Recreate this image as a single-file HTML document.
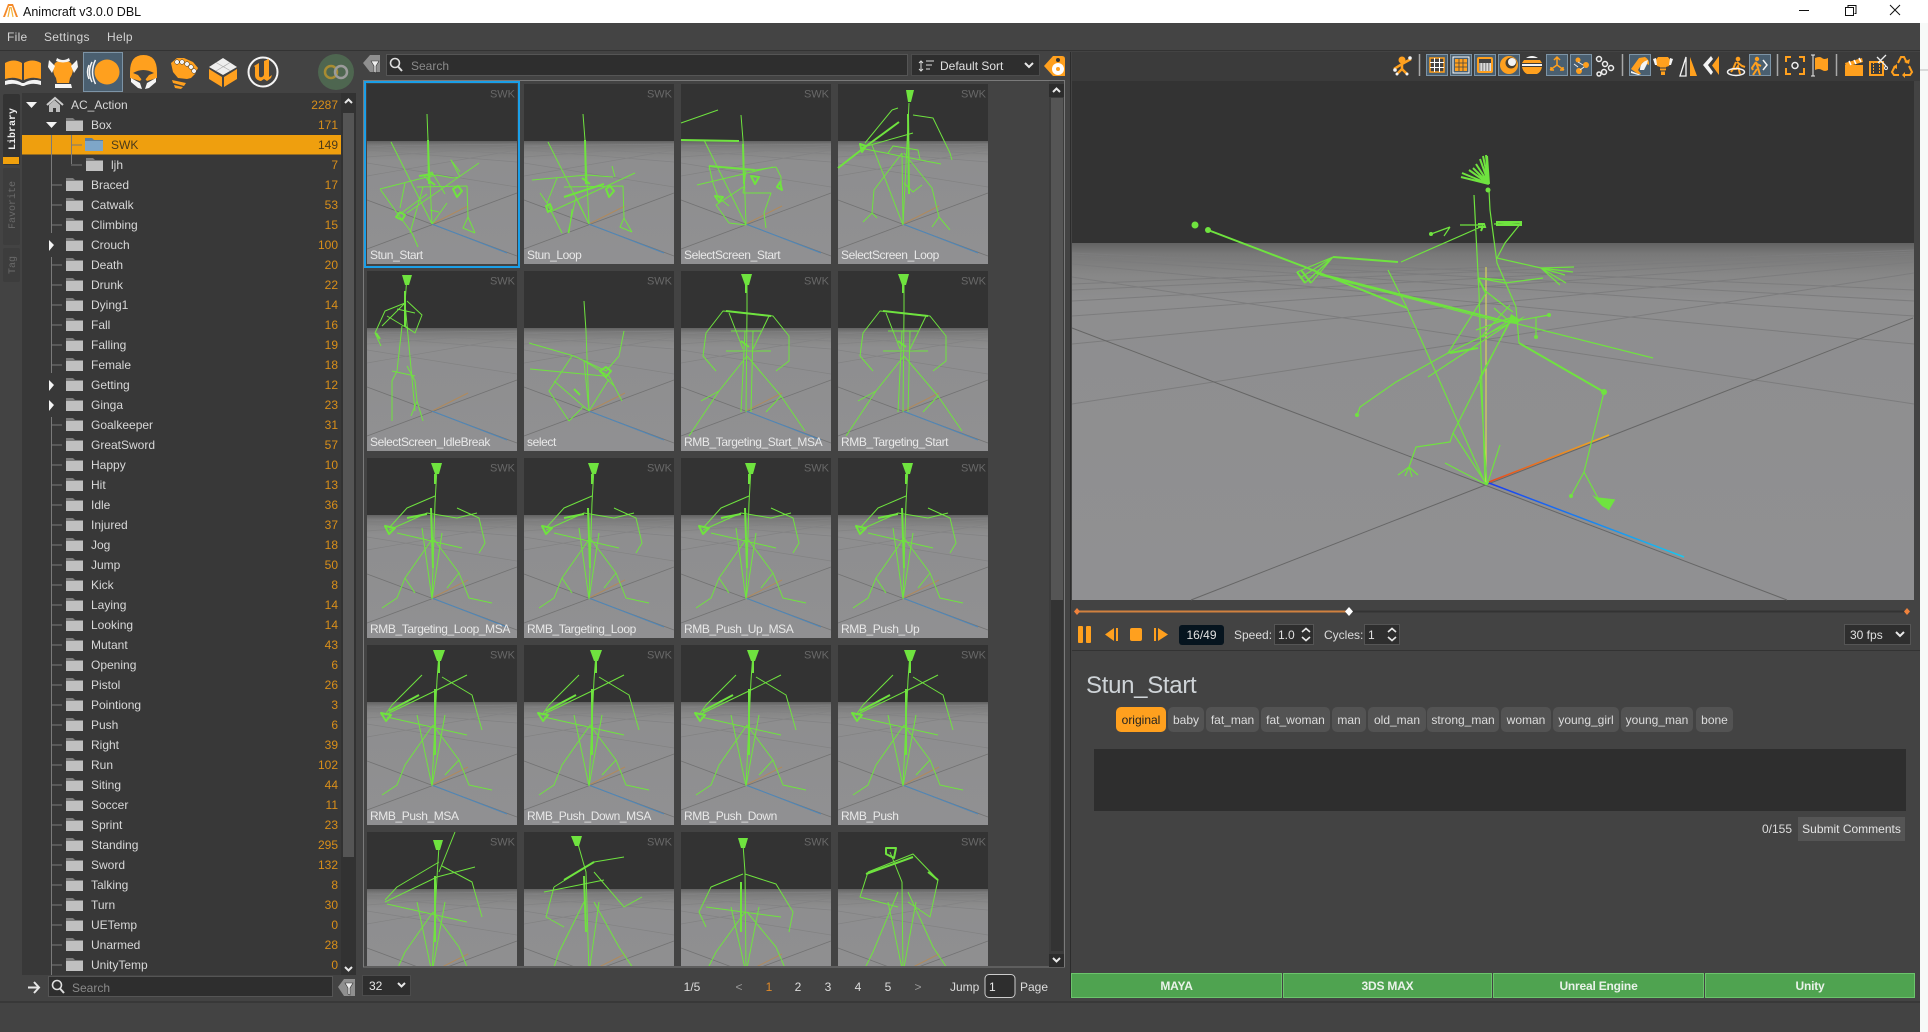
<!DOCTYPE html>
<html><head><meta charset="utf-8"><title>Animcraft v3.0.0 DBL</title>
<style>
html,body{margin:0;padding:0;width:1928px;height:1032px;overflow:hidden;background:#434343}
svg{display:block;position:absolute;left:0;top:0}
text{font-family:"Liberation Sans",sans-serif;font-size:12px}
.t{fill:#d8d8d8}.c{fill:#d98f1a;text-anchor:end}.l{fill:#e8e8e8;letter-spacing:-.4px}.s{fill:#686868;font-size:11px;text-anchor:end}
.g{fill:none;stroke:#6fe33f;stroke-width:1;stroke-linejoin:round}
.gb{fill:none;stroke:#6fe33f;stroke-width:2;stroke-linejoin:round}
.gf{fill:#6fe33f}
.tag{fill:#535353}.tt{fill:#dcdcdc;text-anchor:middle}
.o{fill:#ffa01e}.w{fill:#f4f4f4}
.ol{fill:none;stroke:#ffa01e;stroke-width:2}.wl{fill:none;stroke:#f4f4f4;stroke-width:1.5}
.bx{fill:#4a5f70;stroke:#7d94a6}
.pg{fill:#dcdcdc;text-anchor:middle}
.ex{fill:#e9f2e9;text-anchor:middle;font-weight:bold;letter-spacing:-.2px}
.ar{fill:none;stroke:#e8e8e8;stroke-width:2}
.m{fill:#d4d4d4;letter-spacing:.3px}
</style></head><body>
<svg width="1928" height="1032" viewBox="0 0 1928 1032" xmlns="http://www.w3.org/2000/svg">
<defs>
<linearGradient id="fl" x1="0" y1="0" x2="0" y2="1"><stop offset="0" stop-color="#636363"/><stop offset=".03" stop-color="#787878"/><stop offset=".09" stop-color="#878787"/><stop offset=".16" stop-color="#8e8e8f"/><stop offset="1" stop-color="#909092"/></linearGradient>
<linearGradient id="ax1" x1="0" y1="1" x2="1" y2="0"><stop offset="0" stop-color="#e8481c"/><stop offset="1" stop-color="#f0b020"/></linearGradient>
<linearGradient id="ax2" x1="0" y1="0" x2="1" y2="1"><stop offset="0" stop-color="#1c3cf0"/><stop offset="1" stop-color="#18c8f0"/></linearGradient>
<clipPath id="lc"><rect x="365" y="81" width="684" height="885"/></clipPath>
<g id="f"><path d="M0-7h7l2 2h8v3H0z" fill="#7d7d7d"/><path d="M0-4h17v10H0z" fill="#c0c0c0"/></g>
<g id="tb">
<rect width="150" height="57" fill="#333"/><rect y="57" width="150" height="123" fill="url(#fl)"/>
<path d="M0 79L150 103M0 66L150 78M0 62L150 70M0 73L150 62M0 92L150 66M0 62L150 60" stroke="#828283" stroke-width=".7" fill="none"/>
<path d="M0 116L150 172M0 165L150 109" stroke="#727272" stroke-width=".8" fill="none"/>
<path d="M65 140L101 122" stroke="#b08a5c" stroke-width="1"/><path d="M65 140L140 169" stroke="#4f87b8" stroke-width="1"/>
</g>
<g id="pA"><path class="g" d="M60 30L61 56L65 140M24 58L65 140M13 105L56 94L70 91L86 94L93 93M13 105L33 133L45 149L51 163M38 99L33 124M93 93L84 76L93 88M112 79L40 129M100 102L101 133L96 144L108 149M101 133L108 149M50 103L100 102M56 103L43 149M65 140L80 119M63 126L72 128M66 100L57 92L65 88L78 110M33 130L60 110"/><path class="gb" d="M61 56L62 100M33 128l-4 5 6 3 3-5-5-3M86 105l4 8 5-6-4-5zM52 92L66 90M60 95l8 6"/></g>
<g id="pB"><path class="g" d="M59 30L61 56L65 140M24 58L65 140M8 96L63 91L89 93M33 94L23 119L16 109M23 119L38 149M111 89L26 128M88 82L91 93M99 102L100 134L96 143L108 148M100 134L108 148M40 103L99 102M44 149L52 113L65 140M45 149L48 125"/><path class="gb" d="M61 56L62 100M82 105l3 8 5-6-4-5zM22 122l2 6 4-3-2-5zM40 113L80 100M58 94l8 6"/></g>
<g id="pC"><path class="g" d="M60 31L62 56L65 141M23 56L65 141M37 26L0 39M28 82L74 86L95 83M28 82L32 99L37 113M16 101L92 83M95 83L100 93L100 106M65 86L62 109L90 109L83 129L85 144M62 103L35 121L48 139M48 139L65 141M37 113L48 122"/><path class="gb" d="M0 56L58 57M28 82L74 86M70 92l4 8 4-7zM34 112l4 6 4-5zM99 98l2 8-5-3zM62 60L63 100"/></g>
<g id="pD"><path class="g" d="M71 19L65 141M54 26L27 59M22 64L75 49M75 31L95 34L112 69L114 76M22 64L103 80M64 69L65 141M34 61L65 141M64 69L36 106L34 129L25 138M34 129L39 134M66 69L94 104L101 133L112 146M101 133L94 143M50 69L55 62L80 66L82 75M66 99L75 108L84 101M54 26L60 24"/><path class="gb" d="M0 84L27 63L61 38M70 30l1 80M22 60l2 8 4-6z"/><path class="gf" d="M68 6l8 0-3 12h-3z"/></g>
<g id="pE"><path class="g" d="M40 5L38 32L48 140M38 32L18 40L8 62L14 75M40 30L55 44L48 62L38 55M35 55L30 100L25 110L25 150M40 95L48 110L50 130L56 150M30 38L48 42M20 45L45 60M38 32L15 55M25 100L48 105M50 130L44 145"/><path class="gb" d="M38 20L38 55M9 62l4 6"/><path class="gf" d="M35 4l10 0-3 10h-4z"/></g>
<g id="pF"><path class="g" d="M60 30L62 60L65 140M5 72L50 85L82 100L95 85L100 60M6 98L80 105L90 115M48 85L25 120L45 150M65 140L60 90L85 105L98 130M30 110L65 140L85 108M45 150L60 135"/><path class="gb" d="M76 100l6 6 5-6-5-4zM50 118l6 6"/></g>
<g id="pG"><path class="g" d="M66 6L66 40L65 141M66 42L42 40L25 62L22 85L35 100M66 42L92 45L108 65L108 90L95 100M45 80L90 80M50 60L80 60M66 85L38 120L8 165M66 85L100 125L124 160M64 60L60 141M72 60L70 141M38 120L20 130M100 125L85 141M48 42L62 78M88 45L72 78"/><path class="gb" d="M65 12L65 22M45 40L90 45M60 70l8 6"/><path class="gf" d="M60 3l11 0-3 11h-4z"/></g>
<g id="pH"><path class="g" d="M70 10L68 45L65 141M68 38L40 50L22 70M22 72L60 55L90 60L110 55M90 50L112 60L118 85L112 95M30 75L95 90M66 80L38 120L30 140L15 150M66 80L92 115L102 140L125 145M65 141L55 70M65 141L75 75M92 115L80 130M38 120L48 135"/><path class="gb" d="M68 16L68 26M18 68l4 8 6-6zM60 56L40 60M64 50L66 110"/><path class="gf" d="M64 5l11 0-3 11h-4z"/></g>
<g id="pI"><path class="g" d="M72 8L70 35L65 141M55 30L25 60L18 70M18 70L70 45L100 30M75 32L105 50L115 85M20 72L100 90M66 80L38 120L30 140L15 150M66 80L92 115L102 140L125 145M65 141L50 70M65 141L78 70M92 115L78 130"/><path class="gb" d="M72 15L72 28M14 68l5 8 5-6zM22 66L52 50M68 44L68 110"/><path class="gf" d="M66 5l12 0-4 11h-4z"/></g>
<g id="pJ"><path class="g" d="M72 40L88 0M72 14L70 45L65 141M72 30L30 55L18 68M18 70L70 45L108 35M75 34L105 50L115 85M20 72L100 90M66 80L38 120L28 142L15 150M66 80L92 115L102 140L125 145M65 141L50 70M65 141L78 70"/><path class="gb" d="M68 44L68 110"/><path class="gf" d="M66 8l10 0-3 10h-4z"/></g>
<g id="pK"><path class="g" d="M52 5L62 40L65 141M30 55L70 30L100 25M30 55L22 85L40 95M20 60L80 48M70 40L100 75L118 65M60 70L35 120L25 150M70 70L95 115L115 145M65 141L75 70"/><path class="gb" d="M40 48L70 30M60 44L62 100"/><path class="gf" d="M47 4l11 0-3 10h-4z"/></g>
<g id="pL"><path class="g" d="M62 12L64 40L65 141M62 42L30 55L18 80L25 95M64 42L95 52L112 80L108 100M25 75L100 85M64 80L35 120L20 150M66 80L95 115L110 150M65 141L50 75M65 141L78 75"/><path class="gb" d="M60 50L60 100"/><path class="gf" d="M57 6l10 0-3 10h-4z"/></g>
<g id="pM"><path class="g" d="M52 20L64 50L65 141M30 40L75 22L100 48L92 85L70 70M30 40L22 65L60 75M60 60L35 120L20 150M70 60L95 115L115 145M65 141L78 70M65 141L50 70"/><path class="gb" d="M48 16l10 0-2 10-8-4zM28 42L75 25M90 40L100 48"/></g>
<g id="sk"><path d="M1489 190L1490 210L1497 263L1516 307M1474 195L1479 293L1485 483M1483 225L1460 225M1483 226L1401 262M1431 234L1450 227M1450 227L1444 236M1494 224L1521 223L1505 243L1497 258M1388 270L1407 308L1486 485M1510 322L1653 358M1510 322L1549 315M1536 317L1536 337M1497 258L1541 268M1541 268L1574 267M1541 268L1566 283M1541 268L1565 275M1541 268L1573 272M1541 268L1560 285M1478 278L1505 283L1543 278M1478 278L1505 280M1483 337L1510 320M1448 353L1478 348M1510 323L1448 353L1396 382L1360 407L1357 415M1510 323L1428 377M1486 293L1448 353M1510 320L1453 433L1450 442L1416 447L1409 467L1398 475M1409 467L1418 475M1409 467L1405 476M1409 467L1412 477M1516 307L1519 343M1604 392L1584 472L1571 496M1584 472L1598 498L1609 510M1598 498L1615 500M1445 463L1487 485M1500 445L1487 485M1480 377L1510 322M1480 377L1487 485M1453 433L1487 485M1494 308L1510 322M1480 338L1510 305M1476 330L1510 318M1494 298L1513 312M1484 290L1510 310M1333 257L1300 278M1333 257L1305 283M1333 257L1311 283M1333 257L1297 272" fill="none" stroke="#6fe33f" stroke-width="1.200"/>
<path d="M1208 230L1305 267L1407 308M1316 273L1508 322M1333 257L1398 262M1519 343L1604 392M1486 293L1478 278M1450 353L1478 348" fill="none" stroke="#6fe33f" stroke-width="2"/>
<path d="M1320 275L1500 322" fill="none" stroke="#6fe33f" stroke-width="1"/>
<path d="M1489 184l-6-28M1489 184l-3-29M1489 184l-2-28M1489 184l-9-25M1489 184l-13-20M1489 184l-16-16M1489 184l-20-14M1489 184l-27-11M1489 184l-28-7" fill="none" stroke="#6fe33f" stroke-width="2"/>
<path d="M1592 495l6 3 17 2-6 10-7-4zM1508 323l3-9 8 5 6-3-8 8z" fill="#6fe33f"/>
<path d="M1478 224h6l1 3-7 0M1483 226l-2 5M1497 225h24v-3h-24zM1297 272l8 11M1301 270l10 13" fill="none" stroke="#6fe33f" stroke-width="2"/>
<circle cx="1195" cy="225" r="3.500" fill="#6fe33f"/><circle cx="1208" cy="230" r="3" fill="#6fe33f"/><circle cx="1549" cy="315" r="2" fill="#6fe33f"/><circle cx="1571" cy="496" r="2" fill="#6fe33f"/><circle cx="1536" cy="337" r="2" fill="#6fe33f"/><circle cx="1488" cy="190" r="2.500" fill="#6fe33f"/><circle cx="1357" cy="415" r="2" fill="#6fe33f"/><circle cx="1604" cy="392" r="3" fill="#6fe33f"/><circle cx="1431" cy="234" r="2" fill="#6fe33f"/>
</g>
</defs>

<rect width="1928" height="1032" fill="#434343"/>
<rect x="1920" y="23" width="8" height="1009" fill="#f7f9f8"/>
<path d="M1920 70h8" stroke="#bbb"/>
<rect width="1928" height="23" fill="#fff"/>
<path d="M3 17L8 4h5l5 13h-2L12 6H9L5 17z" fill="#f4892a"/><path d="M8 17L10 7M11 7l2 10" stroke="#f4b43a" stroke-width="1.200" fill="none"/>
<text x="23" y="16" fill="#111" style="font-size:12.500px">Animcraft v3.0.0 DBL</text>
<path d="M1799 10.500h10" stroke="#111"/><path d="M1845.500 7.500h8v8h-8zM1848 7V5.500h8v8h-1.500" fill="none" stroke="#111"/><path d="M1890 5l10 10M1900 5l-10 10" stroke="#111"/>

<rect y="23" width="1920" height="27" fill="#444"/>
<text class="m" x="7" y="41">File</text><text class="m" x="44" y="41">Settings</text><text class="m" x="107" y="41">Help</text>
<path d="M0 50.500H1920" stroke="#333"/>

<!-- main toolbar icons -->
<path class="o" d="M5 63Q14 58 22 63V80Q14 76 5 79zM24 63Q32 58 41 63V79Q32 76 24 80z"/>
<path class="w" d="M5 81Q14 78 22 83h2Q32 78 41 81v4Q32 82 24 86h-2Q14 82 5 85z"/>
<path class="o" d="M55 63q8-5 16 0q4 8-1 15l-1 5H57l-1-5q-5-7-1-15z"/>
<path class="w" d="M49 60l6 6-3 7-4-6zM77 60l-6 6 3 7 4-6zM57 58q6 4 12 0l1 3q-7 3-14 0zM55 84h16l1 4H55z"/>
<rect x="83.500" y="52.500" width="39" height="39" class="bx"/>
<circle cx="107" cy="72" r="12.500" class="o"/>
<path d="M92 62q-5 10 0 20M95.500 60q-6 12 0 24M89 65q-3 7 0 14" class="wl"/>
<path class="o" d="M143.500 55q13.500 0 13.500 17v6l-10 3-3.500-4-3.500 4-10-3v-6q0-17 13.500-17z"/>
<path d="M133 73q10-6 21 0l-5 2-4 5-1.500 10-1.500-10-4-5z" fill="#434343"/>
<path class="w" d="M131 78l9 5 2 6-4-1-7-6zM156 78l-9 5-2 6 4-1 7-6z"/>
<path class="o" d="M171 63l6-5h7l9 4 5 6-3 6-4 4-4 1-9-1-5-6zM172 80l14 3-2 3-11-3zM174 85l9 2-2 2-6-1z"/>
<g class="w" stroke="#333" stroke-width=".5"><circle cx="177" cy="62" r="2.300"/><circle cx="182" cy="62" r="2.300"/><circle cx="187" cy="64" r="2.300"/><circle cx="191" cy="67" r="2.300"/><circle cx="194" cy="71" r="2.300"/></g>
<path d="M223 58l14 9-14 8-14-8z" fill="#eee"/><path d="M216 62.500l14 8M223 67l7-4.500M216 71l14-8.500" stroke="#aaa" stroke-width=".7" fill="none"/>
<path class="o" d="M209 69l13 8v10l-13-8zM224 77l13-8v10l-13 8z"/>
<circle cx="263" cy="72" r="14.500" fill="none" stroke="#f4f4f4" stroke-width="2"/>
<path class="o" d="M254 66l5-3v12q0 3 3 2 2-1 2-3V61l5-2v18l3-2-1 3-4 3-3-2-3 2q-6-1-6-6V67z"/>
<circle cx="336" cy="72" r="18" fill="#4e6650"/><circle cx="331" cy="72" r="6" fill="none" stroke="#a88c32" stroke-width="2.500"/><circle cx="341" cy="72" r="6" fill="none" stroke="#9b9b9b" stroke-width="2.500"/>

<!-- left tabs -->
<rect x="3" y="94" width="17" height="71" fill="#333" rx="2"/><rect x="3" y="157" width="16" height="7" fill="#f0a00c"/>
<rect x="3" y="168" width="17" height="77" fill="#3d3d3d" rx="2"/><rect x="3" y="248" width="17" height="34" fill="#3d3d3d" rx="2"/>
<text transform="translate(15,150) rotate(-90)" fill="#f0f0f0" style="font-family:'Liberation Mono',monospace;font-size:10px;font-weight:bold">Library</text>
<text transform="translate(15,229) rotate(-90)" fill="#6a6a6a" style="font-family:'Liberation Mono',monospace;font-size:10px">Favorite</text>
<text transform="translate(15,274) rotate(-90)" fill="#6a6a6a" style="font-family:'Liberation Mono',monospace;font-size:10px">Tag</text>

<!-- tree -->
<rect x="22" y="93" width="334" height="905" fill="#383838"/>
<rect x="341" y="93" width="15" height="883" fill="#323232"/>
<rect x="343" y="113" width="11" height="744" fill="#555"/>
<path d="M345 103l3.500-3.500 3.500 3.500M345 967l3.500 3.500 3.500-3.500" class="ar"/>
<rect x="22" y="135" width="319" height="19.500" fill="#ef9f0e"/>
<path d="M51.500 135V233M51.500 257V373M51.500 417V975M71.500 135V164M51 185h11M51 205h11M51 225h11M51 265h11M51 285h11M51 305h11M51 325h11M51 345h11M51 365h11M51 425h11M51 445h11M51 465h11M51 485h11M51 505h11M51 525h11M51 545h11M51 565h11M51 585h11M51 605h11M51 625h11M51 645h11M51 665h11M51 685h11M51 705h11M51 725h11M51 745h11M51 765h11M51 785h11M51 805h11M51 825h11M51 845h11M51 865h11M51 885h11M51 905h11M51 925h11M51 945h11M51 965h11M71 145h11M71 165h11" stroke="#7a7a7a" fill="none"/>
<path class="w" d="M26 102h11l-5.500 6zM46 122h11l-5.500 6zM49 240l5 5-5 6zM49 380l5 5-5 6zM49 400l5 5-5 6z"/>
<path d="M47 105l8-7 8 7" fill="none" stroke="#ccc" stroke-width="2"/><path d="M49 105v7h4v-4h3v4h4v-7l-5.500-5z" fill="#bbb"/>
<path d="M85 138h7l2 2h9v3H85z" fill="#5d7f9e"/><path d="M85 141h18v10H85z" fill="#7ea6c8"/>
<use href="#f" x="66" y="125"/><use href="#f" x="86" y="165"/>
<use href="#f" x="66" y="185"/><use href="#f" x="66" y="205"/><use href="#f" x="66" y="225"/><use href="#f" x="66" y="245"/><use href="#f" x="66" y="265"/><use href="#f" x="66" y="285"/><use href="#f" x="66" y="305"/><use href="#f" x="66" y="325"/><use href="#f" x="66" y="345"/><use href="#f" x="66" y="365"/><use href="#f" x="66" y="385"/><use href="#f" x="66" y="405"/><use href="#f" x="66" y="425"/><use href="#f" x="66" y="445"/><use href="#f" x="66" y="465"/><use href="#f" x="66" y="485"/><use href="#f" x="66" y="505"/><use href="#f" x="66" y="525"/><use href="#f" x="66" y="545"/><use href="#f" x="66" y="565"/><use href="#f" x="66" y="585"/><use href="#f" x="66" y="605"/><use href="#f" x="66" y="625"/><use href="#f" x="66" y="645"/><use href="#f" x="66" y="665"/><use href="#f" x="66" y="685"/><use href="#f" x="66" y="705"/><use href="#f" x="66" y="725"/><use href="#f" x="66" y="745"/><use href="#f" x="66" y="765"/><use href="#f" x="66" y="785"/><use href="#f" x="66" y="805"/><use href="#f" x="66" y="825"/><use href="#f" x="66" y="845"/><use href="#f" x="66" y="865"/><use href="#f" x="66" y="885"/><use href="#f" x="66" y="905"/><use href="#f" x="66" y="925"/><use href="#f" x="66" y="945"/><use href="#f" x="66" y="965"/>

<text class="t" x="71" y="109">AC_Action</text><text class="c" x="338" y="109">2287</text>
<text class="t" x="91" y="129">Box</text><text class="c" x="338" y="129">171</text>
<text x="111" y="149" fill="#4a3a1a">SWK</text><text x="338" y="149" fill="#4a3a1a" text-anchor="end">149</text>
<text class="t" x="111" y="169">ljh</text><text class="c" x="338" y="169">7</text>
<text class="t" x="91" y="189">Braced</text><text class="c" x="338" y="189">17</text>
<text class="t" x="91" y="209">Catwalk</text><text class="c" x="338" y="209">53</text>
<text class="t" x="91" y="229">Climbing</text><text class="c" x="338" y="229">15</text>
<text class="t" x="91" y="249">Crouch</text><text class="c" x="338" y="249">100</text>
<text class="t" x="91" y="269">Death</text><text class="c" x="338" y="269">20</text>
<text class="t" x="91" y="289">Drunk</text><text class="c" x="338" y="289">22</text>
<text class="t" x="91" y="309">Dying1</text><text class="c" x="338" y="309">14</text>
<text class="t" x="91" y="329">Fall</text><text class="c" x="338" y="329">16</text>
<text class="t" x="91" y="349">Falling</text><text class="c" x="338" y="349">19</text>
<text class="t" x="91" y="369">Female</text><text class="c" x="338" y="369">18</text>
<text class="t" x="91" y="389">Getting</text><text class="c" x="338" y="389">12</text>
<text class="t" x="91" y="409">Ginga</text><text class="c" x="338" y="409">23</text>
<text class="t" x="91" y="429">Goalkeeper</text><text class="c" x="338" y="429">31</text>
<text class="t" x="91" y="449">GreatSword</text><text class="c" x="338" y="449">57</text>
<text class="t" x="91" y="469">Happy</text><text class="c" x="338" y="469">10</text>
<text class="t" x="91" y="489">Hit</text><text class="c" x="338" y="489">13</text>
<text class="t" x="91" y="509">Idle</text><text class="c" x="338" y="509">36</text>
<text class="t" x="91" y="529">Injured</text><text class="c" x="338" y="529">37</text>
<text class="t" x="91" y="549">Jog</text><text class="c" x="338" y="549">18</text>
<text class="t" x="91" y="569">Jump</text><text class="c" x="338" y="569">50</text>
<text class="t" x="91" y="589">Kick</text><text class="c" x="338" y="589">8</text>
<text class="t" x="91" y="609">Laying</text><text class="c" x="338" y="609">14</text>
<text class="t" x="91" y="629">Looking</text><text class="c" x="338" y="629">14</text>
<text class="t" x="91" y="649">Mutant</text><text class="c" x="338" y="649">43</text>
<text class="t" x="91" y="669">Opening</text><text class="c" x="338" y="669">6</text>
<text class="t" x="91" y="689">Pistol</text><text class="c" x="338" y="689">26</text>
<text class="t" x="91" y="709">Pointiong</text><text class="c" x="338" y="709">3</text>
<text class="t" x="91" y="729">Push</text><text class="c" x="338" y="729">6</text>
<text class="t" x="91" y="749">Right</text><text class="c" x="338" y="749">39</text>
<text class="t" x="91" y="769">Run</text><text class="c" x="338" y="769">102</text>
<text class="t" x="91" y="789">Siting</text><text class="c" x="338" y="789">44</text>
<text class="t" x="91" y="809">Soccer</text><text class="c" x="338" y="809">11</text>
<text class="t" x="91" y="829">Sprint</text><text class="c" x="338" y="829">23</text>
<text class="t" x="91" y="849">Standing</text><text class="c" x="338" y="849">295</text>
<text class="t" x="91" y="869">Sword</text><text class="c" x="338" y="869">132</text>
<text class="t" x="91" y="889">Talking</text><text class="c" x="338" y="889">8</text>
<text class="t" x="91" y="909">Turn</text><text class="c" x="338" y="909">30</text>
<text class="t" x="91" y="929">UETemp</text><text class="c" x="338" y="929">0</text>
<text class="t" x="91" y="949">Unarmed</text><text class="c" x="338" y="949">28</text>
<text class="t" x="91" y="969">UnityTemp</text><text class="c" x="338" y="969">0</text>

<!-- tree bottom bar -->
<rect x="22" y="975" width="334" height="23" fill="#434343"/>
<path d="M28 987.500h10M34 982l5 5.500-5 5.500" class="ar"/>
<rect x="48.500" y="976.500" width="284" height="20" fill="#2e2e2e" stroke="#555"/>
<circle cx="57" cy="985" r="4.500" fill="none" stroke="#ddd" stroke-width="1.600"/><path d="M60 988.500l4 4.500" stroke="#ddd" stroke-width="2"/>
<text x="72" y="992" fill="#8a8a8a">Search</text>
<path d="M338 987l6-8h11v17h-11z" fill="#8f8f8f"/><path d="M345 983h8l-3 5v7l-2-1v-6z" fill="#eee" stroke="#333" stroke-width=".6"/>

<!-- search row -->
<path d="M363 63l7-8h10v17h-10z" fill="#8f8f8f"/><path d="M371 61h8l-3 5v7l-2-1v-6z" fill="#eee" stroke="#333" stroke-width=".6"/>
<rect x="386.500" y="54.500" width="521" height="21" fill="#2e2e2e" stroke="#555"/>
<circle cx="395" cy="63" r="4.500" fill="none" stroke="#ddd" stroke-width="1.600"/><path d="M398 66.500l4 4.500" stroke="#ddd" stroke-width="2"/>
<text x="411" y="70" fill="#8a8a8a">Search</text>
<rect x="911.500" y="54.500" width="128" height="21" fill="#2e2e2e" stroke="#4c4c4c"/>
<path d="M921 61v10M919 63l2-2 2 2M919 69l2 2 2-2M926 61h8M926 65h6M926 69h4" stroke="#ddd" fill="none"/>
<text x="940" y="70" fill="#e0e0e0">Default Sort</text>
<path d="M1025 63l4 4 4-4" class="ar"/>
<path class="o" d="M1044 66l9-10h9q3 0 3 3v17h-12z"/><circle cx="1058" cy="69" r="6" fill="#fff"/><circle cx="1058" cy="69" r="2" fill="#ffa01e"/><circle cx="1058" cy="60" r="2" fill="#333"/>

<!-- list -->
<rect x="363.500" y="80.500" width="701" height="886.500" fill="#434343" stroke="#7a7a7a"/>
<g clip-path="url(#lc)">
<g transform="translate(367,84)"><use href="#tb"/><use href="#pA"/><text class="s" x="148" y="13.500">SWK</text><text class="l" x="3" y="175">Stun_Start</text></g>
<g transform="translate(524,84)"><use href="#tb"/><use href="#pB"/><text class="s" x="148" y="13.500">SWK</text><text class="l" x="3" y="175">Stun_Loop</text></g>
<g transform="translate(681,84)"><use href="#tb"/><use href="#pC"/><text class="s" x="148" y="13.500">SWK</text><text class="l" x="3" y="175">SelectScreen_Start</text></g>
<g transform="translate(838,84)"><use href="#tb"/><use href="#pD"/><text class="s" x="148" y="13.500">SWK</text><text class="l" x="3" y="175">SelectScreen_Loop</text></g>
<g transform="translate(367,271)"><use href="#tb"/><use href="#pE"/><text class="s" x="148" y="13.500">SWK</text><text class="l" x="3" y="175">SelectScreen_IdleBreak</text></g>
<g transform="translate(524,271)"><use href="#tb"/><use href="#pF"/><text class="s" x="148" y="13.500">SWK</text><text class="l" x="3" y="175">select</text></g>
<g transform="translate(681,271)"><use href="#tb"/><use href="#pG"/><text class="s" x="148" y="13.500">SWK</text><text class="l" x="3" y="175">RMB_Targeting_Start_MSA</text></g>
<g transform="translate(838,271)"><use href="#tb"/><use href="#pG"/><text class="s" x="148" y="13.500">SWK</text><text class="l" x="3" y="175">RMB_Targeting_Start</text></g>
<g transform="translate(367,458)"><use href="#tb"/><use href="#pH"/><text class="s" x="148" y="13.500">SWK</text><text class="l" x="3" y="175">RMB_Targeting_Loop_MSA</text></g>
<g transform="translate(524,458)"><use href="#tb"/><use href="#pH"/><text class="s" x="148" y="13.500">SWK</text><text class="l" x="3" y="175">RMB_Targeting_Loop</text></g>
<g transform="translate(681,458)"><use href="#tb"/><use href="#pH"/><text class="s" x="148" y="13.500">SWK</text><text class="l" x="3" y="175">RMB_Push_Up_MSA</text></g>
<g transform="translate(838,458)"><use href="#tb"/><use href="#pH"/><text class="s" x="148" y="13.500">SWK</text><text class="l" x="3" y="175">RMB_Push_Up</text></g>
<g transform="translate(367,645)"><use href="#tb"/><use href="#pI"/><text class="s" x="148" y="13.500">SWK</text><text class="l" x="3" y="175">RMB_Push_MSA</text></g>
<g transform="translate(524,645)"><use href="#tb"/><use href="#pI"/><text class="s" x="148" y="13.500">SWK</text><text class="l" x="3" y="175">RMB_Push_Down_MSA</text></g>
<g transform="translate(681,645)"><use href="#tb"/><use href="#pI"/><text class="s" x="148" y="13.500">SWK</text><text class="l" x="3" y="175">RMB_Push_Down</text></g>
<g transform="translate(838,645)"><use href="#tb"/><use href="#pI"/><text class="s" x="148" y="13.500">SWK</text><text class="l" x="3" y="175">RMB_Push</text></g>
<g transform="translate(367,832)"><use href="#tb"/><use href="#pJ"/><text class="s" x="148" y="13.500">SWK</text></g>
<g transform="translate(524,832)"><use href="#tb"/><use href="#pK"/><text class="s" x="148" y="13.500">SWK</text></g>
<g transform="translate(681,832)"><use href="#tb"/><use href="#pL"/><text class="s" x="148" y="13.500">SWK</text></g>
<g transform="translate(838,832)"><use href="#tb"/><use href="#pM"/><text class="s" x="148" y="13.500">SWK</text></g>
</g>
<rect x="365" y="82" width="154" height="185" fill="none" stroke="#1a9fe8" stroke-width="2"/>
<rect x="1049" y="81" width="15" height="885" fill="#3c3c3c"/>
<rect x="1051" y="98" width="12" height="853" fill="#333"/><rect x="1051" y="98" width="12" height="502" fill="#555"/>
<rect x="1049" y="84" width="15" height="13" fill="#2c2c2c"/><rect x="1049" y="954" width="15" height="13" fill="#2c2c2c"/>
<path d="M1053 92l3.500-3.500 3.500 3.500M1053 958l3.500 3.500 3.500-3.500" class="ar"/>

<!-- pagination -->
<rect x="362.500" y="975.500" width="48" height="20" fill="#2e2e2e" stroke="#4c4c4c"/><text x="369" y="990" fill="#e8e8e8">32</text><path d="M398 983l3.500 3.500 3.500-3.500" class="ar"/>
<text class="pg" x="692" y="991">1/5</text><text class="pg" x="739" y="991" style="fill:#9a9a9a">&lt;</text><text class="pg" x="769" y="991" style="fill:#e08a28">1</text><text class="pg" x="798" y="991">2</text><text class="pg" x="828" y="991">3</text><text class="pg" x="858" y="991">4</text><text class="pg" x="888" y="991">5</text><text class="pg" x="918" y="991" style="fill:#9a9a9a">&gt;</text>
<text x="950" y="991" fill="#dcdcdc">Jump</text>
<rect x="985" y="974.500" width="30" height="23" rx="4" fill="#2e2e2e" stroke="#ccc"/><text x="989" y="991" fill="#e8e8e8">1</text>
<text x="1020" y="991" fill="#dcdcdc">Page</text>

<path d="M0 1002H1920" stroke="#2e2e2e"/>
<path d="M1070.500 52V998" stroke="#2c2c2c"/>

<!-- right toolbar -->
<rect x="1072" y="52" width="848" height="29" fill="#3b3b3b"/>
<g>
<circle cx="1402" cy="60" r="3.500" class="o"/><path d="M1402 63v6M1402 64l-8 5M1402 64l9-5M1402 69l-5 5M1402 69l5 5" stroke="#ffa01e" stroke-width="2.500" fill="none"/><circle cx="1395" cy="70" r="1.800" class="w"/><circle cx="1410" cy="58" r="1.800" class="w"/><circle cx="1397" cy="74" r="1.500" class="w"/><circle cx="1407" cy="74" r="1.500" class="w"/>
<path d="M1419.500 54v22M1622.500 54v22M1777.500 54v22M1836.500 54v22" stroke="#a8a8a8" stroke-width="1.500"/>
<rect x="1426.500" y="54.500" width="21" height="21" class="bx"/><rect x="1430" y="58" width="14" height="14" fill="#444" stroke="#ffa01e" stroke-width="1.500"/><path d="M1434.500 58v14M1439.500 58v14M1430 62.500h14M1430 67.500h14" stroke="#fff"/>
<rect x="1450.500" y="54.500" width="21" height="21" class="bx"/><rect x="1453" y="57" width="16" height="16" fill="none" stroke="#fff"/><rect x="1455" y="59" width="12" height="12" class="o"/><path d="M1459 59v12M1463 59v12M1455 63h12M1455 67h12" stroke="#444" stroke-width=".8"/>
<rect x="1474.500" y="54.500" width="21" height="21" class="bx"/><rect x="1477" y="57" width="16" height="16" rx="2" class="o"/><rect x="1479" y="63" width="12" height="8" fill="#ddd"/><path d="M1479 64h12M1479 66h12M1479 68h12M1479 70h12" stroke="#555" stroke-dasharray="1.500 1.500"/><rect x="1479" y="59" width="12" height="4" fill="#444"/>
<rect x="1498.500" y="54.500" width="21" height="21" class="bx"/><circle cx="1509" cy="65" r="9" class="o"/><circle cx="1511" cy="63" r="5.500" fill="#4a4030"/><circle cx="1512" cy="62" r="4" class="w"/>
<path class="w" d="M1526 58q6-4 12 0zM1522 66v-2h20v2z"/><path class="o" d="M1524 60h16l2 3h-20zM1522 67h20q-1 5-5 7h-10q-4-2-5-7z"/>
<rect x="1546.500" y="54.500" width="21" height="21" class="bx"/><path d="M1557 65v-8M1554 60l3-3 3 3M1557 65l-7 5M1551 67v3h3M1557 65l7 5M1563 67v3h-3" fill="none" stroke="#ffa01e" stroke-width="1.500"/>
<rect x="1570.500" y="54.500" width="21" height="21" class="bx"/><circle cx="1578" cy="60" r="2.500" class="o"/><circle cx="1586" cy="65" r="3" class="o"/><circle cx="1579" cy="71" r="3" class="o"/><path d="M1578 62l5 3M1584 67l-4 3M1574 64l4 3" stroke="#eee" fill="none"/>
<g fill="none" stroke="#eee" stroke-width="1.500"><circle cx="1599" cy="59" r="2.500"/><circle cx="1605" cy="64" r="2.500"/><circle cx="1611" cy="68" r="2.500"/><circle cx="1604" cy="72" r="2.500"/><circle cx="1599" cy="74" r="2"/></g>
<rect x="1629.500" y="54.500" width="21" height="21" class="bx"/><path class="o" d="M1631 69l8-11 6-1q5 3 4 8l-6-3-5 8 3 4h-3z"/><path class="w" d="M1640 70q0-8 8-10l-1 4-3 6zM1631 71l10 4h-3l-7-2z"/>
<path class="o" d="M1658 57h10l3 4-2 5-3 1v3l-1 1v4h-4v-4l-1-1v-3l-3-1-2-5z"/><path class="w" d="M1653 59l3-1 1 7-2 0zM1673 59l-3-1-1 7 2 0z"/><path d="M1660 68h6M1660 71h6" stroke="#3b3b3b"/>
<path d="M1686 57l-6 19h6z" fill="none" stroke="#f4f4f4" stroke-width="1.300"/><path class="o" d="M1690 57l7 19h-7z"/>
<path class="w" d="M1711 56l-8 9 8 10 2-3-5-7 5-6z"/><path class="o" d="M1719 56v19l-7-9.500z"/>
<circle cx="1738" cy="59" r="2.300" class="o"/><path d="M1736 62l-3 7h3l2-3 2 8M1737 62l5 4 3 1M1733 69l-2 3" stroke="#ffa01e" stroke-width="2" fill="none"/><ellipse cx="1736" cy="72" rx="8.500" ry="3.500" fill="none" stroke="#f4f4f4" stroke-width="1.500"/>
<rect x="1749.500" y="54.500" width="21" height="21" class="bx"/><circle cx="1757" cy="59" r="2.200" class="o"/><path d="M1756 62l-4 6 1 2M1756 62l2 6 2 7M1757 64l4 2M1757 69l-4 6" stroke="#ffa01e" stroke-width="2" fill="none"/><path d="M1763 60l4 5-4 5" class="wl"/>
<path d="M1786 62v-5h5M1799 57h5v5M1804 68v6h-5M1791 74h-5v-6" class="ol"/><circle cx="1795" cy="65.500" r="3" fill="none" stroke="#eee" stroke-width="1.500"/>
<path d="M1813 55v21M1811 55h4M1811 76h4" stroke="#eee" fill="none"/><path class="o" d="M1815 58q5-2 7 0t6 0v12q-3 2-6 0t-7 0z"/>
<path class="o" d="M1845 65h18v11h-18z"/><path class="o" d="M1845 63l17-5 1 4-17 5z"/><path d="M1849 61l2 4M1854 60l2 4M1859 58l2 4" stroke="#fff" stroke-width="1.500"/>
<rect x="1870" y="62" width="13" height="13" fill="none" stroke="#ffa01e" stroke-width="2"/><path d="M1873.500 62v13M1879.500 62v13" stroke="#ffa01e" stroke-dasharray="2 1"/><path d="M1877 57l9 9M1886 55l-8 8" stroke="#eee" stroke-width="1.300" fill="none"/><circle cx="1886" cy="68" r="1.500" fill="none" stroke="#eee"/>
<path d="M1898 63l3-6h3l3 6M1909 66l3 6-2 3h-5M1899 75h-5l-2-3 3-6" fill="none" stroke="#ffa01e" stroke-width="2"/><path class="o" d="M1904 62l5 2 1-5zM1905 72l-3 3 3 3zM1893 67l4 2 0-5z"/>
</g>

<!-- viewport -->
<rect x="1072" y="81" width="842" height="162" fill="#333"/>
<rect x="1072" y="243" width="842" height="357" fill="url(#fl)"/>
<path d="M1072 277L1914 404M1072 264L1914 344M1072 258L1914 316M1072 255L1914 301M1072 253L1914 290M1072 404L1914 273M1072 344L1914 262M1072 316L1914 256M1072 301L1914 254M1072 290L1914 252M1072 284L1914 250" stroke="#7c7c7d" fill="none"/>
<path d="M1072 328L1787 600M1913 318L1191 600" stroke="#666" fill="none"/>
<path d="M1489 482L1609 435" stroke="url(#ax1)" stroke-width="1.500"/>
<path d="M1489 483L1684 557" stroke="url(#ax2)" stroke-width="1.500"/>
<path d="M1486 267V483" stroke="#e8e050"/>
<use href="#sk"/>

<!-- timeline -->
<path d="M1077 611.500H1907" stroke="#333" stroke-width="2"/>
<path d="M1077 611.500H1349" stroke="#d0813f" stroke-width="2"/>
<path d="M1077 608l3 3.500-3 3.500-3-3.500zM1907 608l3 3.500-3 3.500-3-3.500z" fill="#f0823c"/>
<path d="M1349 607l4 4.500-4 4.500-4-4.500z" fill="#fff"/>
<rect x="1078" y="626" width="5" height="17" rx="1" class="o"/><rect x="1086" y="626" width="5" height="17" rx="1" class="o"/>
<path class="o" d="M1114 628v13l-9-6.500zM1116 628h2v13h-2z"/><rect x="1130" y="628" width="12" height="13" rx="2" class="o"/><path class="o" d="M1154 628h2v13h-2zM1158 628l10 6.500-10 6.500z"/>
<rect x="1179" y="625" width="45" height="20" rx="3" fill="#06141e"/><text x="1201.500" y="639" text-anchor="middle" fill="#e0e0e0">16/49</text>
<text x="1234" y="639" fill="#dcdcdc">Speed:</text>
<rect x="1274.500" y="624.500" width="39" height="20" fill="#2e2e2e" stroke="#555"/><text x="1278" y="639" fill="#e0e0e0">1.0</text><path d="M1302 632l4-3.500 4 3.500M1302 637l4 3.500 4-3.500" class="ar" style="stroke-width:1.600"/>
<text x="1324" y="639" fill="#dcdcdc">Cycles:</text>
<rect x="1364.500" y="624.500" width="35" height="20" fill="#2e2e2e" stroke="#555"/><text x="1368" y="639" fill="#e0e0e0">1</text><path d="M1388 632l4-3.500 4 3.500M1388 637l4 3.500 4-3.500" class="ar" style="stroke-width:1.600"/>
<rect x="1844.500" y="624.500" width="66" height="20" fill="#2e2e2e" stroke="#555"/><text x="1850" y="639" fill="#e0e0e0">30 fps</text><path d="M1896 632l4 4 4-4" class="ar"/>
<path d="M1072 650.500H1920" stroke="#333"/>

<text x="1086" y="693" fill="#cfd4d8" style="font-size:24px;letter-spacing:-.3px">Stun_Start</text>
<rect x="1116" y="707" width="50" height="25" rx="5" fill="#ffa01e"/><text x="1141" y="724" text-anchor="middle" fill="#222">original</text>
<rect class="tag" x="1168" y="707" width="36" height="25" rx="5"/><text class="tt" x="1186" y="724">baby</text>
<rect class="tag" x="1206" y="707" width="53" height="25" rx="5"/><text class="tt" x="1232.500" y="724">fat_man</text>
<rect class="tag" x="1261" y="707" width="69" height="25" rx="5"/><text class="tt" x="1295.500" y="724">fat_woman</text>
<rect class="tag" x="1332" y="707" width="34" height="25" rx="5"/><text class="tt" x="1349" y="724">man</text>
<rect class="tag" x="1368" y="707" width="58" height="25" rx="5"/><text class="tt" x="1397" y="724">old_man</text>
<rect class="tag" x="1427" y="707" width="72" height="25" rx="5"/><text class="tt" x="1463" y="724">strong_man</text>
<rect class="tag" x="1501" y="707" width="50" height="25" rx="5"/><text class="tt" x="1526" y="724">woman</text>
<rect class="tag" x="1553" y="707" width="66" height="25" rx="5"/><text class="tt" x="1586" y="724">young_girl</text>
<rect class="tag" x="1621" y="707" width="72" height="25" rx="5"/><text class="tt" x="1657" y="724">young_man</text>
<rect class="tag" x="1696" y="707" width="37" height="25" rx="5"/><text class="tt" x="1714.500" y="724">bone</text>
<rect x="1094" y="749" width="812" height="62" fill="#2e2e2e"/>
<text x="1762" y="833" fill="#dcdcdc">0/155</text>
<rect x="1798" y="817" width="107" height="24" fill="#555"/><text x="1851.500" y="833" text-anchor="middle" fill="#e4e4e4">Submit Comments</text>

<!-- export buttons -->
<rect x="1071.500" y="973.500" width="210" height="24" fill="#4fa350" stroke="#6cc46c"/><text class="ex" x="1176.500" y="990">MAYA</text>
<rect x="1283.500" y="973.500" width="208" height="24" fill="#4fa350" stroke="#6cc46c"/><text class="ex" x="1387.500" y="990">3DS MAX</text>
<rect x="1493.500" y="973.500" width="210" height="24" fill="#4fa350" stroke="#6cc46c"/><text class="ex" x="1598.500" y="990">Unreal Engine</text>
<rect x="1705.500" y="973.500" width="209" height="24" fill="#4fa350" stroke="#6cc46c"/><text class="ex" x="1810" y="990">Unity</text>
</svg>
</body></html>
